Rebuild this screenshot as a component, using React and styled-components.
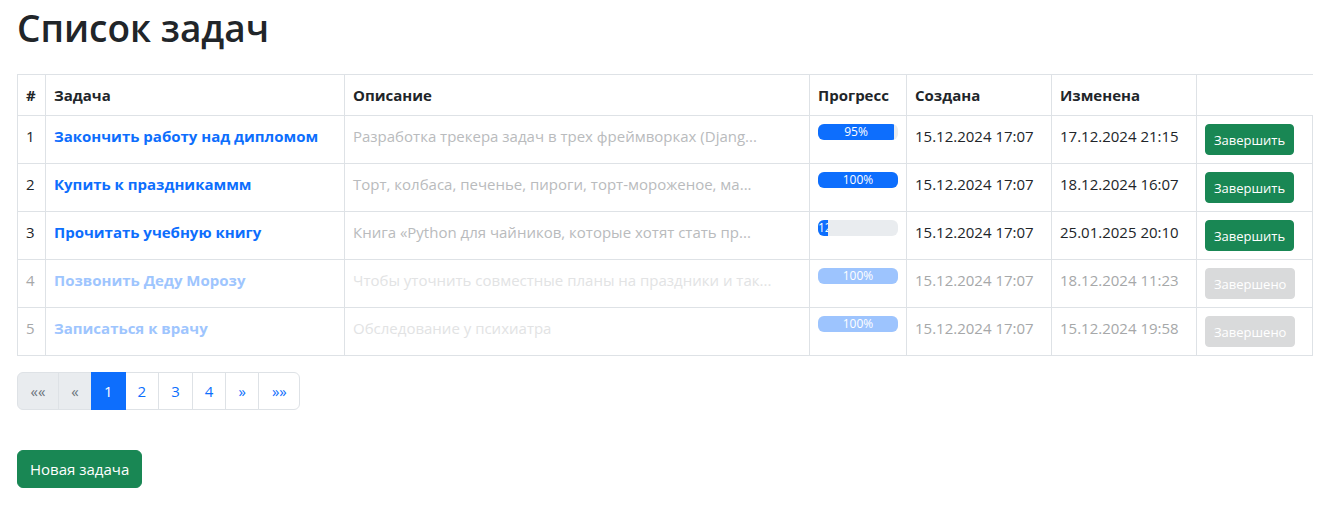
import React from "react";
import styled, { createGlobalStyle } from "styled-components";

const GlobalStyle = createGlobalStyle`
  *, *::before, *::after { box-sizing: border-box; }
  body {
    margin: 0;
    background: #fff;
    color: #212529;
    font-family: "Open Sans", "Noto Sans", sans-serif;
    font-size: 15px;
    line-height: 24px;
  }
`;

const Page = styled.main`
  padding: 4px 27px 24px 17px;
`;

const Title = styled.h1`
  margin: 0 0 22px;
  font-size: 37px;
  font-weight: 600;
  line-height: 48px;
`;

const TaskTable = styled.table`
  width: 100%;
  table-layout: fixed;
  border-collapse: collapse;
  margin: 0 0 16px;
`;

const Column = styled.col`
  width: ${(p) => p.$width || "auto"};
`;

const HeadCell = styled.th`
  padding: 8px;
  border: 1px solid #dee2e6;
  font-weight: 700;
  text-align: left;
  white-space: nowrap;
`;

const ActionHead = styled.td`
  border: 1px solid #dee2e6;
  border-right: none;
`;

const Cell = styled.td`
  padding: 8px;
  border: 1px solid #dee2e6;
  vertical-align: top;
  white-space: nowrap;
  color: ${(p) => (p.$done ? "#a6a8a9" : "#212529")};
`;

const DescriptionCell = styled(Cell)`
  overflow: hidden;
  text-overflow: ellipsis;
  color: ${(p) => (p.$done ? "#e2e3e4" : "#b9bbbd")};
`;

const TaskLink = styled.a`
  color: ${(p) => (p.$done ? "#9ec5fe" : "#0d6efd")};
  font-weight: 700;
  text-decoration: none;
`;

const Progress = styled.div`
  width: 80px;
  height: 16px;
  overflow: hidden;
  border-radius: 6px;
  background: #e9ecef;
  opacity: ${(p) => (p.$done ? 0.4 : 1)};
`;

const ProgressBar = styled.div`
  overflow: hidden;
  background: #0d6efd;
  color: #fff;
  font-size: 12px;
  line-height: 16px;
  text-align: center;
`;

const Button = styled.button`
  display: inline-block;
  padding: 6px 12px;
  border: 1px solid #198754;
  border-radius: 6px;
  background: #198754;
  color: #fff;
  font-family: inherit;
  font-size: 15px;
  line-height: 24px;
  white-space: nowrap;
  cursor: pointer;
`;

const RowButton = styled(Button)`
  display: block;
  padding: 5px 8px 3px;
  border-radius: 4px;
  font-size: 13px;
  line-height: 21px;

  &:disabled {
    border-color: #d9dadb;
    background: #d9dadb;
    cursor: default;
  }
`;

const Pagination = styled.ul`
  display: flex;
  margin: 0 0 40px;
  padding: 0;
  list-style: none;
`;

const PageItem = styled.li`
  & + & { margin-left: -1px; }
  &:first-child > a { border-radius: 6px 0 0 6px; }
  &:last-child > a { border-radius: 0 6px 6px 0; }
`;

const PageLink = styled.a`
  display: block;
  position: relative;
  min-width: ${(p) => (p.$wide ? "42px" : "34px")};
  padding: 6px 12px;
  border: 1px solid #dee2e6;
  background: #fff;
  color: #0d6efd;
  text-align: center;
  text-decoration: none;

  &[aria-disabled="true"] {
    background: #e9ecef;
    color: #6c757d;
  }

  &[aria-current="page"] {
    z-index: 1;
    border-color: #0d6efd;
    background: #0d6efd;
    color: #fff;
  }
`;

const tasks = [
  { title: "Закончить работу над дипломом", text: "Разработка трекера задач в трех фреймворках (Djang...", progress: 95, created: "15.12.2024 17:07", changed: "17.12.2024 21:15" },
  { title: "Купить к праздникаммм", text: "Торт, колбаса, печенье, пироги, торт-мороженое, ма...", progress: 100, created: "15.12.2024 17:07", changed: "18.12.2024 16:07" },
  { title: "Прочитать учебную книгу", text: "Книга «Python для чайников, которые хотят стать пр...", progress: 12, created: "15.12.2024 17:07", changed: "25.01.2025 20:10" },
  { title: "Позвонить Деду Морозу", text: "Чтобы уточнить совместные планы на праздники и так...", progress: 100, created: "15.12.2024 17:07", changed: "18.12.2024 11:23", done: true },
  { title: "Записаться к врачу", text: "Обследование у психиатра", progress: 100, created: "15.12.2024 17:07", changed: "15.12.2024 19:58", done: true },
];

const pages = [
  { label: "««", disabled: true, wide: true },
  { label: "«", disabled: true },
  { label: "1", current: true },
  { label: "2" },
  { label: "3" },
  { label: "4" },
  { label: "»" },
  { label: "»»", wide: true },
];

function TaskRow({ task, number }) {
  const { title, text, progress, created, changed, done } = task;
  return (
    <tr>
      <Cell $done={done}>{number}</Cell>
      <Cell $done={done}>
        <TaskLink href="#" $done={done}>{title}</TaskLink>
      </Cell>
      <DescriptionCell $done={done}>{text}</DescriptionCell>
      <Cell>
        <Progress
          $done={done}
          role="progressbar"
          aria-label={title}
          aria-valuenow={progress}
          aria-valuemin={0}
          aria-valuemax={100}
        >
          <ProgressBar style={{ width: `${progress}%` }}>{progress}%</ProgressBar>
        </Progress>
      </Cell>
      <Cell $done={done}>{created}</Cell>
      <Cell $done={done}>{changed}</Cell>
      <Cell>
        <RowButton type="button" disabled={done}>
          {done ? "Завершено" : "Завершить"}
        </RowButton>
      </Cell>
    </tr>
  );
}

export default function App() {
  return (
    <>
      <GlobalStyle />
      <Page>
        <Title>Список задач</Title>
        <TaskTable>
          <colgroup>
            <Column $width="28px" />
            <Column $width="299px" />
            <Column />
            <Column $width="97px" />
            <Column $width="145px" />
            <Column $width="145px" />
            <Column $width="116px" />
          </colgroup>
          <thead>
            <tr>
              <HeadCell scope="col">#</HeadCell>
              <HeadCell scope="col">Задача</HeadCell>
              <HeadCell scope="col">Описание</HeadCell>
              <HeadCell scope="col">Прогресс</HeadCell>
              <HeadCell scope="col">Создана</HeadCell>
              <HeadCell scope="col">Изменена</HeadCell>
              <ActionHead />
            </tr>
          </thead>
          <tbody>
            {tasks.map((task, i) => (
              <TaskRow key={task.title} task={task} number={i + 1} />
            ))}
          </tbody>
        </TaskTable>
        <nav aria-label="Страницы">
          <Pagination>
            {pages.map((page) => (
              <PageItem key={page.label}>
                <PageLink
                  href="#"
                  $wide={page.wide}
                  aria-disabled={page.disabled}
                  aria-current={page.current ? "page" : undefined}
                >
                  {page.label}
                </PageLink>
              </PageItem>
            ))}
          </Pagination>
        </nav>
        <Button type="button">Новая задача</Button>
      </Page>
    </>
  );
}
